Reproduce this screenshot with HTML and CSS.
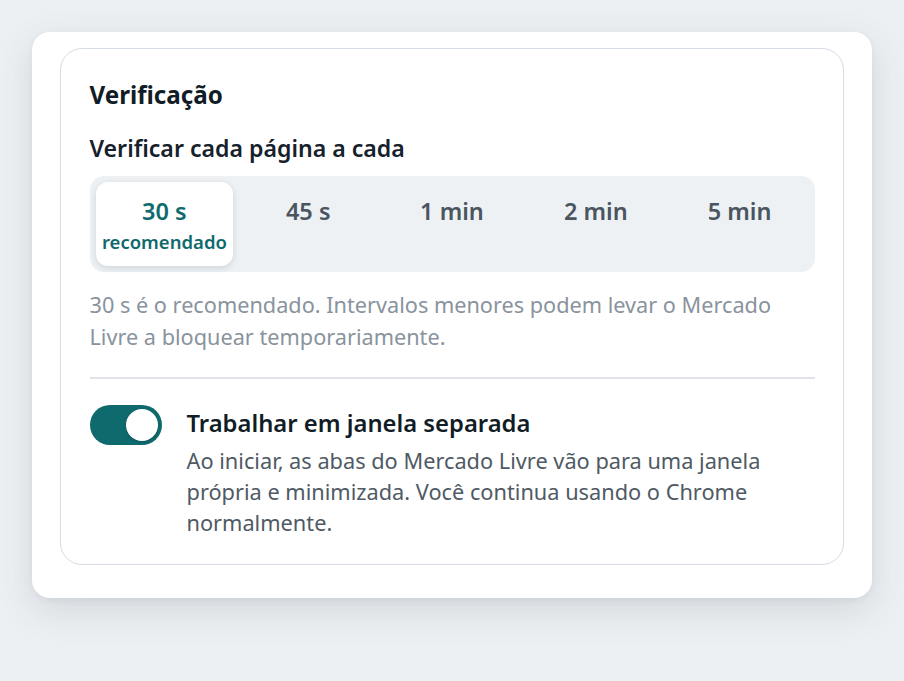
FILE: index.html
```html
<!DOCTYPE html>
<html lang="pt-BR">
<head>
<meta charset="utf-8">
<title>Verificação</title>
<link rel="stylesheet" href="styles.css">
</head>
<body>
<div class="card">
  <section class="panel">
    <h2 class="panel-title">Verificação</h2>
    <h3 class="field-label">Verificar cada página a cada</h3>
    <div class="segmented">
      <button class="seg seg-active"><span class="seg-main">30 s</span><span class="seg-sub">recomendado</span></button>
      <button class="seg"><span class="seg-main">45 s</span></button>
      <button class="seg"><span class="seg-main">1 min</span></button>
      <button class="seg"><span class="seg-main">2 min</span></button>
      <button class="seg"><span class="seg-main">5 min</span></button>
    </div>
    <p class="hint">30 s é o recomendado. Intervalos menores podem levar o Mercado Livre a bloquear temporariamente.</p>
    <hr class="divider">
    <div class="toggle-row">
      <span class="switch"><span class="knob"></span></span>
      <div class="toggle-text">
        <div class="toggle-title">Trabalhar em janela separada</div>
        <div class="toggle-desc">Ao iniciar, as abas do Mercado Livre vão para uma janela própria e minimizada. Você continua usando o Chrome normalmente.</div>
      </div>
    </div>
  </section>
</div>
</body>
</html>
```

FILE: styles.css
```css
* { box-sizing: border-box; }
html, body { height: 100%; }
body {
  margin: 0;
  padding: 32px;
  background: #edf0f3;
  font-family: "Noto Sans", "Open Sans", sans-serif;
  color: #16212b;
}
.card {
  background: #ffffff;
  border-radius: 18px;
  padding: 16px 28px 33px;
  box-shadow: 0 12px 36px rgba(40, 55, 70, 0.14), 0 2px 6px rgba(40, 55, 70, 0.05);
}
.panel {
  border: 1.5px solid #d6dde4;
  border-radius: 22px;
  padding: 30px 28.5px 26px;
}
.panel-title {
  margin: 0;
  font-size: 24.2px;
  font-weight: 700;
  line-height: 32px;
  color: #111c26;
}
.field-label {
  margin: 21px 0 12px;
  font-size: 23.1px;
  font-weight: 600;
  line-height: 32px;
  color: #16212b;
}
.segmented {
  display: grid;
  grid-template-columns: repeat(5, 1fr);
  gap: 6px;
  padding: 6px;
  background: #edf1f4;
  border-radius: 14px;
}
.seg {
  display: flex;
  flex-direction: column;
  align-items: center;
  justify-content: flex-start;
  height: 84px;
  padding: 14px 0 0;
  border: 0;
  border-radius: 12px;
  background: transparent;
  font-family: inherit;
  color: #4a5560;
  cursor: pointer;
}
.seg-active {
  background: #ffffff;
  color: #0f6a6e;
  box-shadow: 0 2px 6px rgba(30, 45, 60, 0.14);
}
.seg-main {
  font-size: 23.5px;
  font-weight: 600;
  line-height: 30px;
}
.seg-sub {
  margin-top: 4px;
  font-size: 18.5px;
  font-weight: 600;
  line-height: 24px;
}
.hint {
  margin: 17px 0 0;
  font-size: 21.7px;
  line-height: 32px;
  color: #89939d;
}
.divider {
  margin: 24px 0 26px;
  border: 0;
  border-top: 2px solid #e0e4e8;
}
.toggle-row {
  display: flex;
  align-items: flex-start;
  gap: 25px;
}
.switch {
  flex: none;
  display: flex;
  align-items: center;
  justify-content: flex-end;
  width: 72px;
  height: 40px;
  padding: 4px;
  border-radius: 20px;
  background: #0f6a6e;
}
.knob {
  width: 32px;
  height: 32px;
  border-radius: 50%;
  background: #ffffff;
  box-shadow: 0 1px 3px rgba(0, 0, 0, 0.2);
}
.toggle-title {
  font-size: 23.8px;
  font-weight: 600;
  line-height: 36px;
  color: #111c26;
}
.toggle-desc {
  margin-top: 4px;
  font-size: 21.75px;
  line-height: 31px;
  color: #4f5a64;
}
```
